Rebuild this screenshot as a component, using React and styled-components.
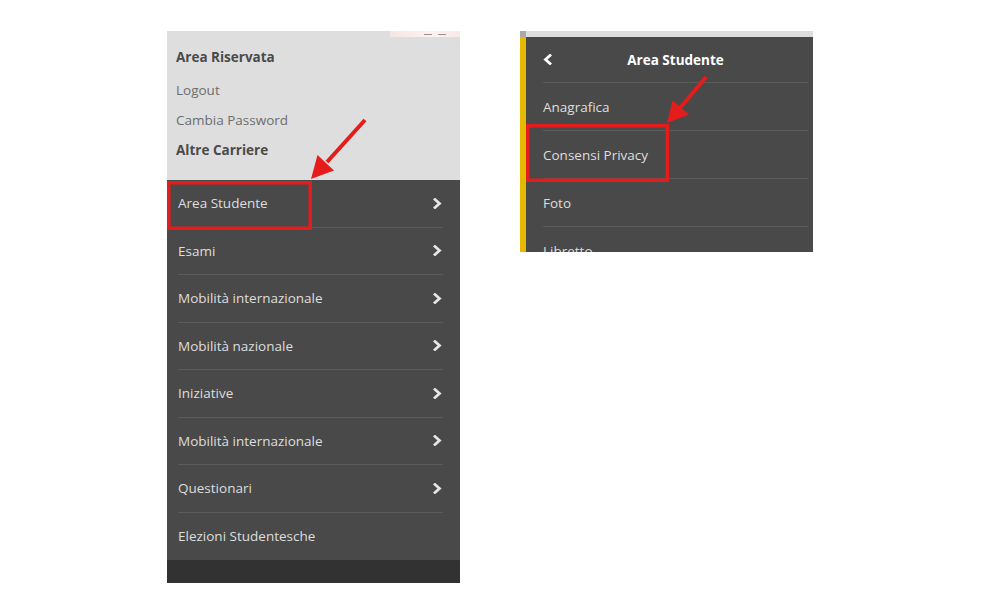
import styled, { createGlobalStyle } from 'styled-components';

const GlobalStyle = createGlobalStyle`
  html, body {
    margin: 0;
    background: #ffffff;
  }
  body {
    font-family: "Open Sans", "Liberation Sans", sans-serif;
  }
`;

const mainItems = [
  { label: 'Area Studente', more: true },
  { label: 'Esami', more: true },
  { label: 'Mobilità internazionale', more: true },
  { label: 'Mobilità nazionale', more: true },
  { label: 'Iniziative', more: true },
  { label: 'Mobilità internazionale', more: true },
  { label: 'Questionari', more: true },
  { label: 'Elezioni Studentesche', more: false },
];

const subItems = ['Anagrafica', 'Consensi Privacy', 'Foto', 'Libretto'];

const Chevron = ({ left }) => (
  <svg width="9" height="11" viewBox="0 0 9 11">
    <polyline
      points={left ? '7,1.5 2.5,5.5 7,9.5' : '2,1.5 6.5,5.5 2,9.5'}
      fill="none"
      stroke="currentColor"
      strokeWidth="2.8"
      strokeLinecap="square"
    />
  </svg>
);

const App = () => {
  return (
    <Stage>
      <GlobalStyle />
      <LeftPanel>
        <Reserved>
          <LogoStrip>
            <span />
            <span />
          </LogoStrip>
          <ReservedTitle>Area Riservata</ReservedTitle>
          <ReservedLink>Logout</ReservedLink>
          <ReservedLink>Cambia Password</ReservedLink>
          <ReservedLink $bold>Altre Carriere</ReservedLink>
        </Reserved>
        <MenuList>
          {mainItems.map((item, i) => (
            <MenuRow key={i}>
              <span>{item.label}</span>
              {item.more && (
                <Arrow>
                  <Chevron />
                </Arrow>
              )}
            </MenuRow>
          ))}
        </MenuList>
        <Footer />
      </LeftPanel>

      <RightPanel>
        <TopStrip />
        <SubMenu>
          <SubHeader>
            <Back>
              <Chevron left />
            </Back>
            <SubTitle>Area Studente</SubTitle>
            <span />
          </SubHeader>
          {subItems.map((label) => (
            <SubRow key={label}>{label}</SubRow>
          ))}
        </SubMenu>
      </RightPanel>

      <Annotations width="987" height="615" viewBox="0 0 987 615">
        <rect x="168.75" y="182.75" width="141.5" height="45.5" fill="none" stroke="#e41c1c" strokeWidth="3.5" />
        <line x1="365" y1="120" x2="327" y2="162" stroke="#e41c1c" strokeWidth="4" />
        <polygon points="311,179 334,170.5 317.5,155" fill="#e41c1c" />

        <rect x="527.75" y="125.75" width="139.5" height="54.5" fill="none" stroke="#e41c1c" strokeWidth="3.5" />
        <line x1="706" y1="77" x2="680" y2="108" stroke="#e41c1c" strokeWidth="4" />
        <polygon points="667,123 689,114.5 672.5,100.5" fill="#e41c1c" />
      </Annotations>
    </Stage>
  );
};

const Stage = styled.div`
  position: relative;
  width: 987px;
  height: 615px;
  box-sizing: border-box;
  padding: 31px 0 0 167px;
  display: flex;
  align-items: flex-start;
  gap: 60px;
  overflow: hidden;
`;

const LeftPanel = styled.div`
  width: 293px;
  display: flex;
  flex-direction: column;
  font-size: 13.5px;
`;

const Reserved = styled.div`
  background: #dedede;
  height: 149px;
  box-sizing: border-box;
  padding: 0 0 0 9px;
  display: flex;
  flex-direction: column;
`;

const LogoStrip = styled.div`
  align-self: flex-end;
  width: 70px;
  height: 6px;
  background: linear-gradient(90deg, #f6e6e2, #fbf3f1 60%, #f7e9e6);
  display: flex;
  align-items: center;
  gap: 6px;
  padding-left: 34px;
  box-sizing: border-box;

  span {
    width: 8px;
    height: 1px;
    background: #a08f89;
  }
`;

const ReservedTitle = styled.div`
  margin-top: 11px;
  line-height: 18px;
  font-weight: 700;
  color: #4a4a4a;
  margin-bottom: 9px;
`;

const ReservedLink = styled.div`
  line-height: 18px;
  padding: 6px 0;
  color: ${(p) => (p.$bold ? '#4a4a4a' : '#6d6d6d')};
  font-weight: ${(p) => (p.$bold ? 700 : 400)};
`;

const MenuList = styled.div`
  background: #494949;
  display: flex;
  flex-direction: column;
`;

const MenuRow = styled.div`
  height: 47.5px;
  box-sizing: border-box;
  margin: 0 17px 0 11px;
  border-bottom: 1px solid #5b5b5b;
  display: flex;
  align-items: center;
  justify-content: space-between;
  color: #dedede;

  &:last-child {
    border-bottom: none;
  }
`;

const Arrow = styled.span`
  display: flex;
  color: #e6e6e6;
  margin-right: 1px;
`;

const Footer = styled.div`
  height: 23px;
  background: #323232;
`;

const RightPanel = styled.div`
  width: 293px;
  height: 221px;
  overflow: hidden;
  display: flex;
  flex-direction: column;
  font-size: 13.5px;
`;

const TopStrip = styled.div`
  height: 6px;
  flex-shrink: 0;
  background: linear-gradient(90deg, #a9a9a9 6px, #dedede 6px);
`;

const SubMenu = styled.div`
  flex: 1;
  background: #494949;
  border-left: 6px solid #e4b900;
  display: flex;
  flex-direction: column;
`;

const SubHeader = styled.div`
  height: 46px;
  flex-shrink: 0;
  box-sizing: border-box;
  margin: 0 5px 0 17px;
  border-bottom: 1px solid #5b5b5b;
  display: grid;
  grid-template-columns: 1fr auto 1fr;
  align-items: center;
`;

const Back = styled.span`
  display: flex;
  color: #ffffff;
`;

const SubTitle = styled.span`
  color: #ffffff;
  font-weight: 700;
`;

const SubRow = styled.div`
  height: 48px;
  flex-shrink: 0;
  box-sizing: border-box;
  margin: 0 5px 0 17px;
  border-bottom: 1px solid #5b5b5b;
  display: flex;
  align-items: center;
  color: #dedede;
`;

const Annotations = styled.svg`
  position: absolute;
  left: 0;
  top: 0;
  pointer-events: none;
`;

export default App;
